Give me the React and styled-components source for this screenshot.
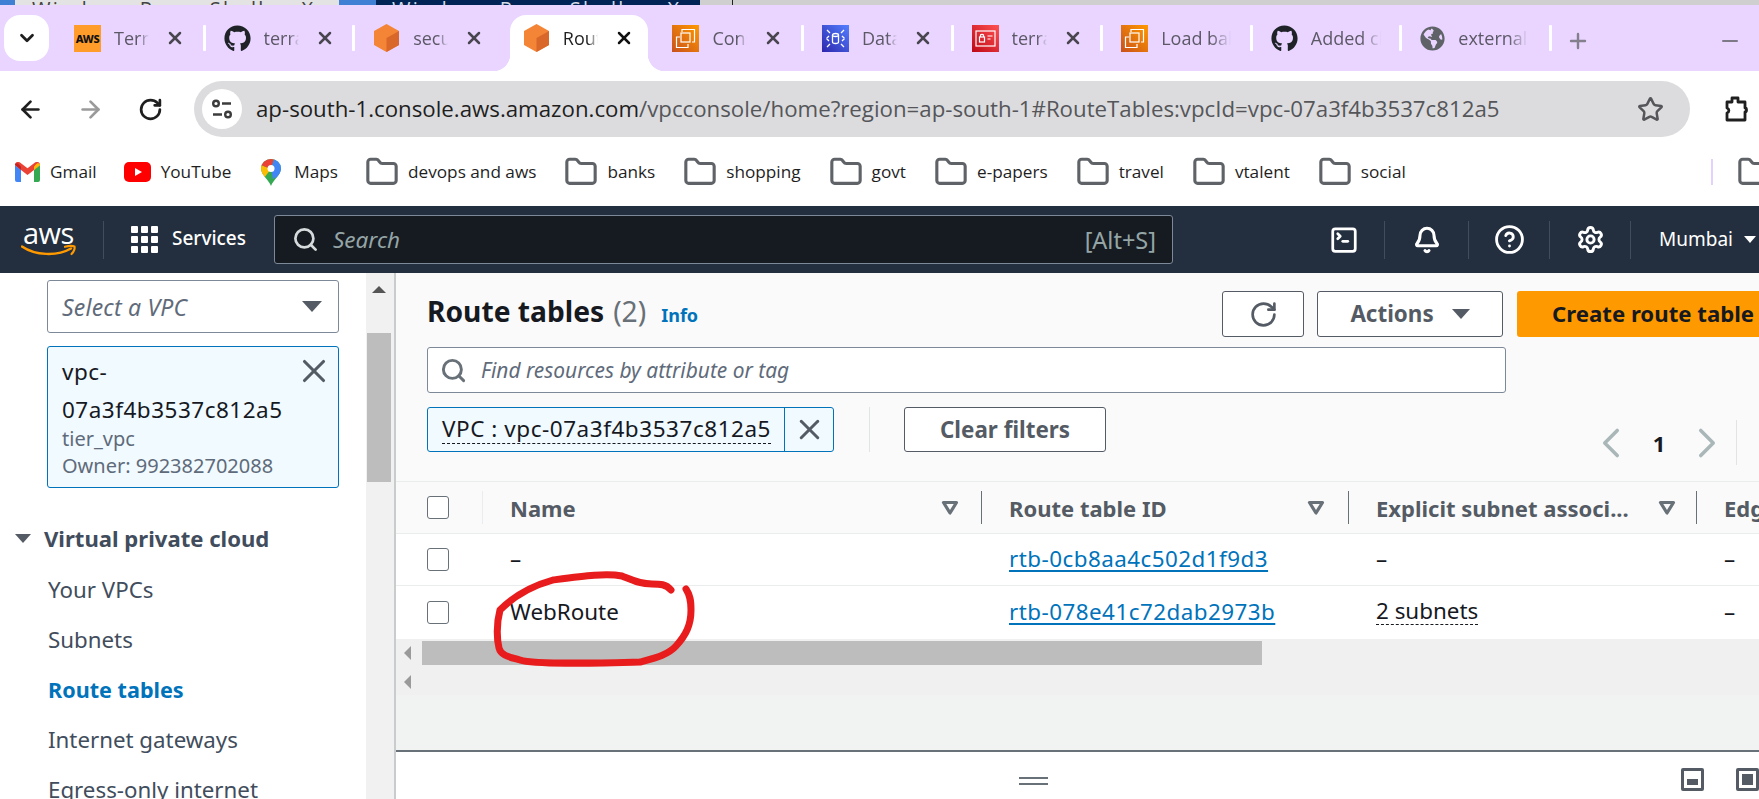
import React from 'react';
import styled, { createGlobalStyle } from 'styled-components';
import { ArrowLeft, ArrowRight, Bell, ChevronDown, ChevronLeft, ChevronRight, CircleHelp, Folder, Minus, Plus, RotateCw, Search, Settings, SquareTerminal, Star, X } from 'lucide-react';
import { FaGithub, FaGlobeAmericas } from 'react-icons/fa';

const GlobalStyle = createGlobalStyle`
  html, body { margin: 0; padding: 0; background: #fff; }
  * { box-sizing: border-box; }
`;

const ui = '"Open Sans", "Noto Sans", "Liberation Sans", sans-serif';
const consoleFont = '"Noto Sans", "Open Sans", "Liberation Sans", sans-serif';

const Page = styled.div`
  position: relative;
  width: 1759px;
  height: 799px;
  overflow: hidden;
  display: flex;
  flex-direction: column;
  font-family: ${consoleFont};
`;

/* sliver of the windows behind the browser */
const TaskStrip = styled.div`
  height: 5px;
  display: flex;
  overflow: hidden;
  background: #cfcfcf;
  flex: none;
`;
const TaskWin = styled.div`
  width: ${p => p.$w}px;
  flex: none;
  height: 5px;
  overflow: hidden;
  display: flex;
  font: 20px/18px ${ui};
  letter-spacing: 2.2px;
  white-space: nowrap;
  background: ${p => p.$bg};
  color: ${p => p.$fg};
`;
const TaskIcon = styled.span`
  width: ${p => p.$w}px;
  height: 5px;
  flex: none;
  margin-right: ${p => p.$gap}px;
  background: #3f7fd4;
`;
const TaskClose = styled.span`
  margin-left: ${p => p.$left}px;
`;
const TaskTick = styled.div`
  width: 1px;
  height: 5px;
  flex: none;
  margin-left: 32px;
  background: #222;
`;

const TabStrip = styled.div`
  height: 66px;
  flex: none;
  display: flex;
  align-items: flex-start;
  padding: 10px 0 0 4px;
  background: #e9d5ff;
`;
const TabListButton = styled.div`
  width: 45px;
  height: 46px;
  margin-right: 7px;
  flex: none;
  border-radius: 16px;
  background: #fff;
  color: #1f1f1f;
  display: flex;
  align-items: center;
  justify-content: center;
`;
const Tab = styled.div`
  position: relative;
  width: ${p => (p.$active ? 138.6 : 146.6)}px;
  height: 56px;
  flex: none;
  margin: ${p => (p.$active ? '0 3px 0 5px' : '0')};
  display: flex;
  align-items: center;
  padding: 0 0 10px ${p => (p.$active ? 13 : 18)}px;
  color: ${p => (p.$active ? '#1f1f1f' : '#5c5866')};
  background: ${p => (p.$active ? '#fff' : 'transparent')};
  border-radius: 16px 16px 0 0;
  &::before, &::after {
    content: '';
    display: ${p => (p.$active ? 'block' : 'none')};
    position: absolute;
    bottom: 0;
    width: 17px;
    height: 17px;
  }
  &::before {
    left: -17px;
    background: radial-gradient(circle at 0 0, transparent 17px, #fff 17.5px);
  }
  &::after {
    right: -17px;
    background: radial-gradient(circle at 100% 0, transparent 17px, #fff 17.5px);
  }
`;
const TabSep = styled.div`
  width: 3px;
  height: 26px;
  margin-top: 10px;
  flex: none;
  border-radius: 1px;
  background: ${p => (p.$hidden ? 'transparent' : '#fff')};
`;
const TabTitle = styled.span`
  width: ${p => (p.$wide ? 70 : 35)}px;
  margin-left: 13px;
  flex: none;
  overflow: hidden;
  white-space: nowrap;
  font: 18px/28px ${ui};
  -webkit-mask-image: linear-gradient(to right, #000 72%, transparent);
  mask-image: linear-gradient(to right, #000 72%, transparent);
`;
const TabClose = styled.span`
  margin-left: 16px;
  display: flex;
  color: ${p => (p.$active ? '#111' : '#4a4650')};
`;
const FavSquare = styled.span`
  width: 27px;
  height: 27px;
  flex: none;
  display: flex;
  align-items: center;
  justify-content: center;
  background: linear-gradient(45deg, ${p => p.$from}, ${p => p.$to});
`;
const AwsFav = styled(FavSquare)`
  color: #111;
  font: 800 11px/27px ${consoleFont};
  letter-spacing: -0.3px;
`;
const GitMark = styled(FaGithub)`
  width: 27px;
  height: 27px;
  flex: none;
  color: #1f2328;
`;
const GlobeMark = styled(FaGlobeAmericas)`
  width: 25px;
  height: 25px;
  flex: none;
  color: #5f6368;
`;
const NewTab = styled.div`
  margin: 14px 0 0 14px;
  display: flex;
  color: #837f8c;
`;
const WinMin = styled.div`
  margin: 14px 0 0 128px;
  display: flex;
  color: #7d7986;
`;

const Toolbar = styled.div`
  height: 76px;
  flex: none;
  display: flex;
  align-items: flex-start;
  padding-top: 10px;
  background: #fff;
`;
const NavBtn = styled.div`
  width: 60px;
  height: 56px;
  flex: none;
  display: flex;
  align-items: center;
  justify-content: center;
  color: ${p => (p.$off ? '#9a9a9a' : '#1f1f1f')};
`;
const Address = styled.div`
  width: 1496px;
  height: 56px;
  flex: none;
  margin-left: 14px;
  display: flex;
  align-items: center;
  padding: 0 26px 0 8px;
  border-radius: 28px;
  background: #dcdcde;
`;
const TuneDot = styled.span`
  width: 40px;
  height: 40px;
  flex: none;
  border-radius: 50%;
  background: #fff;
  display: flex;
  align-items: center;
  justify-content: center;
`;
const Url = styled.div`
  margin-left: 14px;
  font: 22.25px/28px ${ui};
  white-space: nowrap;
  color: #55565a;
`;
const UrlHost = styled.span`
  color: #1f1f1f;
`;
const StarSlot = styled.span`
  margin-left: auto;
  display: flex;
  color: #55565a;
`;
const ExtSlot = styled.span`
  margin: 14px 0 0 32px;
  display: flex;
`;

const Bookmarks = styled.div`
  height: 59px;
  flex: none;
  display: flex;
  align-items: flex-start;
  padding-left: 15px;
  background: #fff;
`;
const Bookmark = styled.div`
  height: 50px;
  flex: none;
  display: flex;
  align-items: center;
  gap: ${p => p.$gap || 9}px;
  margin-right: ${p => p.$after || 28}px;
  font: 17.2px/24px ${ui};
  color: #1f1f1f;
  svg { flex: none; }
`;
const BookSep = styled.div`
  width: 2px;
  height: 26px;
  flex: none;
  margin: 12px 24px 0 0;
  background: #e3d2fa;
`;

const ConsoleBar = styled.header`
  height: 67px;
  flex: none;
  display: flex;
  align-items: center;
  padding-left: 23px;
  background: #232f3e;
  color: #fff;
`;
const AwsLogo = styled.div`
  width: 53px;
  height: 34px;
  flex: none;
  position: relative;
  font: 500 29px/19px ${ui};
  letter-spacing: -0.6px;
  svg { position: absolute; left: -2px; bottom: 0; }
`;
const BarLine = styled.div`
  width: 1px;
  height: 38px;
  flex: none;
  margin-left: 27px;
  background: #414d5c;
`;
const GridDots = styled.div`
  margin-left: 27px;
  width: 27px;
  height: 27px;
  flex: none;
  display: grid;
  grid-template-columns: repeat(3, 7px);
  grid-auto-rows: 7px;
  gap: 3px;
  span { background: #fff; border-radius: 1px; }
`;
const ServicesLabel = styled.span`
  margin: -3px 0 0 14px;
  width: 102px;
  flex: none;
  font: 500 19px/24px ${consoleFont};
`;
const SearchBox = styled.div`
  width: 899px;
  height: 49px;
  flex: none;
  display: flex;
  align-items: center;
  padding: 0 16px 0 17px;
  border: 1px solid #7d8998;
  border-radius: 3px;
  background: #161b22;
  color: #95a5a6;
`;
const SearchHint = styled.span`
  margin-left: 14px;
  font: italic 22.5px/26px ${consoleFont};
`;
const SearchKeys = styled.span`
  margin-left: auto;
  font: 23.5px/26px ${consoleFont};
`;
const BarSlot = styled.div`
  width: ${p => p.$w}px;
  height: 38px;
  flex: none;
  display: flex;
  align-items: center;
  justify-content: center;
  margin-left: ${p => p.$left || 0}px;
  border-right: 1px solid #414d5c;
`;
const Region = styled.div`
  margin: -1px 0 0 28px;
  display: flex;
  align-items: center;
  gap: 11px;
  font: 19px/24px ${consoleFont};
  flex: none;
`;
const Caret = styled.span`
  width: 0;
  height: 0;
  flex: none;
  border-left: ${p => p.$size}px solid transparent;
  border-right: ${p => p.$size}px solid transparent;
  border-top: ${p => p.$size * 1.15}px solid ${p => p.$color};
`;

const Body = styled.div`
  flex: 1;
  min-height: 0;
  display: flex;
`;
const Sidebar = styled.nav`
  width: 366px;
  flex: none;
  overflow: hidden;
  padding: 7px 27px 0 47px;
  background: #fff;
`;
const VpcSelect = styled.div`
  height: 53px;
  display: flex;
  align-items: center;
  justify-content: space-between;
  padding: 0 16px 0 14px;
  border: 1px solid #7d8998;
  border-radius: 3px;
  font: italic 23px/26px ${consoleFont};
  letter-spacing: 0.2px;
  color: #5f6b7a;
`;
const VpcToken = styled.div`
  position: relative;
  height: 142px;
  margin-top: 13px;
  padding: 6px 14px 0;
  border: 1px solid #0073bb;
  border-radius: 3px;
  background: #f1faff;
`;
const VpcId = styled.div`
  font: 22.5px/38px ${consoleFont};
  letter-spacing: 0.5px;
  color: #16191f;
`;
const VpcMeta = styled.div`
  margin-top: -4px;
  font: 20px/27px ${consoleFont};
  color: #5f6b7a;
`;
const TokenClose = styled(X)`
  position: absolute;
  top: 5px;
  right: 5px;
  color: #545b64;
`;
const NavHeading = styled.div`
  margin: 25px 0 2px -32px;
  height: 50px;
  display: flex;
  align-items: center;
  gap: 13px;
  font: 700 22.1px/28px ${consoleFont};
  color: #414d5c;
`;
const NavItem = styled.div`
  height: 50px;
  margin-left: 1px;
  display: flex;
  align-items: center;
  font: ${p => (p.$current ? '700 21.6px' : '400 22.3px')}/28px ${consoleFont};
  color: ${p => (p.$current ? '#0073bb' : '#414d5c')};
  white-space: nowrap;
`;
const VScroll = styled.div`
  position: relative;
  width: 30px;
  flex: none;
  padding: 13px 4px 0 2px;
  display: flex;
  flex-direction: column;
  align-items: center;
  background: #f1f1f1;
  border-right: 2px solid #c9cccc;
`;
const VThumb = styled.div`
  width: 24px;
  height: 149px;
  margin-top: 40px;
  flex: none;
  background: #bdbdbd;
`;
const UpArrow = styled.span`
  width: 0;
  height: 0;
  border-left: 7px solid transparent;
  border-right: 7px solid transparent;
  border-bottom: 7px solid #555;
`;

const Main = styled.main`
  flex: 1;
  min-width: 0;
  display: flex;
  flex-direction: column;
  overflow: hidden;
  background: #fff;
`;
const Panel = styled.div`
  height: 209px;
  flex: none;
  padding: 18px 0 0 31px;
  background: #fafafa;
  border-bottom: 1px solid #eaeded;
`;
const PanelRow = styled.div`
  display: flex;
  align-items: ${p => p.$align || 'center'};
  margin-top: ${p => p.$top || 0}px;
`;
const TitleBlock = styled.div`
  width: 795px;
  flex: none;
  margin-top: -6px;
  display: flex;
  align-items: baseline;
`;
const Title = styled.h1`
  margin: 0;
  font: 700 28.2px/40px ${consoleFont};
  color: #16191f;
`;
const Count = styled.span`
  margin-left: 9px;
  font: 400 28.2px/40px ${consoleFont};
  color: #687078;
`;
const InfoLink = styled.span`
  margin-left: 15px;
  font: 700 18px/24px ${consoleFont};
  color: #0073bb;
`;
const OutlineBtn = styled.div`
  width: ${p => p.$w}px;
  height: ${p => p.$h || 46}px;
  flex: none;
  margin-left: ${p => p.$left || 0}px;
  display: flex;
  align-items: center;
  justify-content: center;
  gap: 18px;
  border: 1px solid #545b64;
  border-radius: 3px;
  background: #fff;
  font: 700 22.4px/26px ${consoleFont};
  color: #545b64;
`;
const PrimaryBtn = styled.div`
  width: 270px;
  height: 46px;
  flex: none;
  margin-left: 14px;
  padding-left: 35px;
  display: flex;
  align-items: center;
  border-radius: 3px;
  background: #ff9900;
  font: 700 22.2px/26px ${consoleFont};
  color: #16191f;
  white-space: nowrap;
`;
const FindBox = styled.div`
  width: 1079px;
  height: 46px;
  flex: none;
  display: flex;
  align-items: center;
  gap: 14px;
  padding-left: 12px;
  border: 1px solid #7d8998;
  border-radius: 3px;
  background: #fff;
  font: italic 20.9px/26px ${consoleFont};
  color: #5f6b7a;
`;
const FilterToken = styled.div`
  width: 407px;
  height: 45px;
  flex: none;
  display: flex;
  border: 1px solid #0073bb;
  border-radius: 3px;
  background: #f1faff;
`;
const FilterText = styled.div`
  width: 357px;
  flex: none;
  padding: 6px 0 0 14px;
  border-right: 1px solid #0073bb;
  font: 22.5px/29px ${consoleFont};
  letter-spacing: 0.54px;
  color: #16191f;
  white-space: nowrap;
`;
const DottedText = styled.span`
  display: inline-block;
  border-bottom: 1px dashed #16191f;
  line-height: ${p => p.$lh || 29}px;
`;
const TokenX = styled.div`
  flex: 1;
  display: flex;
  align-items: center;
  justify-content: center;
  color: #545b64;
`;
const RowLine = styled.div`
  width: 1px;
  height: 45px;
  flex: none;
  margin-left: ${p => p.$left}px;
  background: #e1e4e4;
`;
const Pager = styled.div`
  height: 45px;
  flex: none;
  margin: 13px 0 0 480px;
  display: flex;
  align-items: center;
  color: #aab7b8;
  font: 700 22px/26px ${consoleFont};
  svg { flex: none; }
`;
const PageNum = styled.span`
  width: 46px;
  flex: none;
  text-align: center;
  color: #16191f;
`;
const PagerGear = styled(Settings)`
  margin-left: 22px;
  flex: none;
  color: #545b64;
`;

const columns = '87px 499px 367px 348px 1fr';
const TableRow = styled.div`
  height: ${p => p.$h}px;
  flex: none;
  display: grid;
  grid-template-columns: ${columns};
  align-items: center;
  background: ${p => (p.$head ? '#fafafa' : '#fff')};
  border-bottom: ${p => (p.$last ? 'none' : '1px solid #eaeded')};
`;
const CheckCell = styled.div`
  height: 33px;
  padding-left: 31px;
  display: flex;
  align-items: center;
  border-right: ${p => (p.$head ? '1px solid #eaeded' : 'none')};
`;
const Checkbox = styled.span`
  width: 22px;
  height: 23px;
  border: 1.5px solid #687078;
  border-radius: 3px;
  background: #fff;
`;
const HeadCell = styled.div`
  height: 33px;
  padding: 0 ${p => p.$pad || 22}px 0 27px;
  display: flex;
  align-items: center;
  justify-content: space-between;
  border-right: ${p => (p.$last ? 'none' : '1px solid #687078')};
  font: 700 22px/26px ${consoleFont};
  color: #545b64;
  white-space: nowrap;
  overflow: hidden;
  svg { flex: none; }
`;
const Cell = styled.div`
  padding: 0 0 2px 27px;
  font: 22.4px/26px ${consoleFont};
  color: #16191f;
  white-space: nowrap;
`;
const RouteLink = styled.span`
  color: #0073bb;
  letter-spacing: 0.47px;
  text-decoration: underline;
  text-underline-offset: 3px;
`;
const HTrack = styled.div`
  height: 56px;
  flex: none;
  padding: 2px 0 0 8px;
  display: flex;
  flex-direction: column;
  background: #f0f0f0;
`;
const HLine = styled.div`
  height: 28px;
  display: flex;
  align-items: ${p => (p.$thumb ? 'flex-start' : 'center')};
  gap: 11px;
`;
const LeftArrow = styled.span`
  width: 0;
  height: 0;
  flex: none;
  margin-top: ${p => p.$top || 0}px;
  border-top: 7px solid transparent;
  border-bottom: 7px solid transparent;
  border-right: 7px solid #9a9a9a;
`;
const HThumb = styled.div`
  width: 840px;
  height: 24px;
  flex: none;
  background: #bdbdbd;
`;
const EmptyArea = styled.div`
  height: 57px;
  flex: none;
  background: #f1f3f3;
  border-bottom: 2px solid #687078;
`;
const SplitBar = styled.div`
  flex: 1;
  display: flex;
  align-items: flex-start;
  padding: 16px 0 0 623px;
  background: #fff;
`;
const DragHandle = styled.div`
  width: 29px;
  height: 8px;
  margin: 9px 633px 0 0;
  flex: none;
  border-top: 2px solid #687078;
  border-bottom: 2px solid #687078;
`;
const PanelToggle = styled.span`
  width: 23px;
  height: 23px;
  flex: none;
  margin-right: ${p => p.$after || 0}px;
  display: flex;
  align-items: flex-end;
  padding: 3px;
  border: 3px solid #545b64;
  border-radius: 2px;
  &::after {
    content: '';
    width: 100%;
    height: ${p => p.$fill}px;
    background: #545b64;
  }
`;
const RedMark = styled.svg`
  position: absolute;
  left: 0;
  top: 0;
  pointer-events: none;
`;

const Cube = () => (
  <svg width="27" height="28" viewBox="0 0 27 28" style={{ flex: 'none' }}>
    <polygon points="13.5,0 26,7 26,21 13.5,28 1,21 1,7" fill="#f58536" />
    <polygon points="13.5,14 26,7 26,21 13.5,28" fill="#d9672a" />
  </svg>
);

const Chips = () => (
  <svg width="21" height="21" viewBox="0 0 21 21" fill="none" stroke="#fff" strokeWidth="1.2">
    <path d="M7 4V1.5h12.5V14H17" />
    <rect x="6" y="5" width="9" height="9" />
    <path d="M5 9H1.5v10.5H13V16" />
  </svg>
);

const DbMark = () => (
  <svg width="21" height="21" viewBox="0 0 21 21" fill="none" stroke="#fff" strokeWidth="1.3">
    <ellipse cx="10.5" cy="7" rx="3" ry="1.5" />
    <path d="M7.5 7v7c0 2 6 2 6 0V7M1.5 10.5 4 8M1.5 10.5 4 13M19.5 10.5 17 8M19.5 10.5 17 13M2 2l3 3M19 2l-3 3M2 19l3-3M19 19l-3-3" />
  </svg>
);

const CertMark = () => (
  <svg width="21" height="21" viewBox="0 0 21 21" fill="none" stroke="#fff" strokeWidth="1.2">
    <rect x="1" y="3" width="19" height="15" />
    <rect x="4.5" y="9" width="5" height="5" />
    <path d="M5.5 9V7a2 2 0 0 1 3 0v2M12.5 8h5M12.5 11h3" />
  </svg>
);

const tabs = [
  { icon: <AwsFav $from="#ff9c2a" $to="#ff9c2a">AWS</AwsFav>, title: 'Terraform', close: true },
  { icon: <GitMark />, title: 'terraform', close: true },
  { icon: <Cube />, title: 'security', close: true },
  { icon: <Cube />, title: 'Route tables', close: true, active: true },
  { icon: <FavSquare $from="#c8511b" $to="#ff9900"><Chips /></FavSquare>, title: 'Console', close: true },
  { icon: <FavSquare $from="#2e27ad" $to="#527fff"><DbMark /></FavSquare>, title: 'Database', close: true },
  { icon: <FavSquare $from="#bd0816" $to="#ff5252"><CertMark /></FavSquare>, title: 'terraform', close: true },
  { icon: <FavSquare $from="#c8511b" $to="#ff9900"><Chips /></FavSquare>, title: 'Load balancers' },
  { icon: <GitMark />, title: 'Added changes' },
  { icon: <GlobeMark />, title: 'external-alb' },
];

const GmailIcon = () => (
  <svg width="25" height="20" viewBox="0 0 25 20">
    <path d="M0 3v15a2 2 0 0 0 2 2h4V8z" fill="#4285f4" />
    <path d="M25 3v15a2 2 0 0 1-2 2h-4V8z" fill="#34a853" />
    <path d="M6 8 0 3c0-3 3-4 5-2.500l7.500 5.700L20 .5C22-1 25 0 25 3l-6 5-6.500 5z" fill="#ea4335" />
    <path d="M0 3l6 5V4.500L3 1.600C1.500.6 0 1.500 0 3z" fill="#c5221f" />
    <path d="M25 3l-6 5V4.500l3-2.900C23.500.6 25 1.500 25 3z" fill="#fbbc04" />
  </svg>
);

const YoutubeIcon = () => (
  <svg width="27" height="20" viewBox="0 0 27 20">
    <rect width="27" height="20" rx="5" fill="#f00" />
    <polygon points="11,6 18,10 11,14" fill="#fff" />
  </svg>
);

const MapsIcon = () => (
  <svg width="20" height="27" viewBox="0 0 20 27">
    <clipPath id="pin">
      <path d="M10 27C8 21 0 16 0 9.500a10 9.500 0 0 1 20 0C20 16 12 21 10 27z" />
    </clipPath>
    <g clipPath="url(#pin)">
      <rect width="20" height="27" fill="#34a853" />
      <polygon points="0,6 10,10 3,19 0,16" fill="#fbbc04" />
      <polygon points="0,0 13,0 10,10 0,6" fill="#ea4335" />
      <polygon points="13,0 20,0 20,16 12,20 10,10" fill="#4285f4" />
    </g>
    <circle cx="10" cy="9.500" r="3.500" fill="#fff" />
  </svg>
);

const FolderMark = () => <Folder size={34} color="#5f6368" strokeWidth={2.2} />;

const TuneIcon = () => (
  <svg width="22" height="22" viewBox="0 0 22 22" fill="none" stroke="#3c3c3c" strokeWidth="2.4">
    <circle cx="5" cy="5.500" r="2.800" />
    <path d="M11 5.500h9M2 16.500h9" />
    <circle cx="17" cy="16.500" r="2.800" />
  </svg>
);

const ExtensionIcon = () => (
  <svg width="28" height="28" viewBox="0 0 28 28" fill="none" stroke="#1f1f1f" strokeWidth="2.800" strokeLinejoin="round">
    <path d="M5 7h5V3h6v4h7v6c2 0 2 4 0 4v8H5v-7c2.500-1 2.500-4 0-5z" />
  </svg>
);

const SortMark = () => (
  <svg width="18" height="16" viewBox="0 0 18 16" fill="none" stroke="#687078" strokeWidth="3.200" strokeLinejoin="round">
    <polygon points="2.500,2.500 15.500,2.500 9,13" />
  </svg>
);

const Smile = () => (
  <svg width="56" height="13" viewBox="0 0 56 13" fill="none">
    <path d="M1 2.500C14 11.500 36 12.500 50 4.500" stroke="#ff9900" strokeWidth="2.400" strokeLinecap="round" />
    <path d="M44 2.800c4-1 7.500-1 9.500-.3.500 2-1 5.500-3 7.500" stroke="#ff9900" strokeWidth="2.200" strokeLinecap="round" />
  </svg>
);

const rows = [
  { name: '–', id: 'rtb-0cb8aa4c502d1f9d3', subnets: '–', edge: '–' },
  { name: 'WebRoute', id: 'rtb-078e41c72dab2973b', subnets: '2 subnets', edge: '–', last: true },
];

const navItems = ['Your VPCs', 'Subnets', 'Route tables', 'Internet gateways', 'Egress-only internet'];

export default function App() {
  return (
    <Page>
      <GlobalStyle />
      <TaskStrip>
        <TaskWin $w={339} $bg="#e3e3e3" $fg="#444">
          <TaskIcon $w={15} $gap={17} />
          Windows PowerShell
          <TaskClose $left={36}>X</TaskClose>
        </TaskWin>
        <TaskWin $w={361} $bg="#012456" $fg="#d5dbe6">
          <TaskIcon $w={37} $gap={16} />
          Windows PowerShell
          <TaskClose $left={42}>X</TaskClose>
        </TaskWin>
        <TaskTick />
      </TaskStrip>

      <TabStrip>
        <TabListButton><ChevronDown size={22} strokeWidth={3} /></TabListButton>
        {tabs.map((t, i) => (
          <React.Fragment key={i}>
            <Tab $active={t.active}>
              {t.icon}
              <TabTitle $wide={!t.close}>{t.title}</TabTitle>
              {t.close && <TabClose $active={t.active}><X size={20} strokeWidth={3} /></TabClose>}
            </Tab>
            <TabSep $hidden={t.active || (tabs[i + 1] && tabs[i + 1].active)} />
          </React.Fragment>
        ))}
        <NewTab><Plus size={24} strokeWidth={2.4} /></NewTab>
        <WinMin><Minus size={24} strokeWidth={2} /></WinMin>
      </TabStrip>

      <Toolbar>
        <NavBtn><ArrowLeft size={27} strokeWidth={2.4} /></NavBtn>
        <NavBtn $off><ArrowRight size={27} strokeWidth={2.4} /></NavBtn>
        <NavBtn><RotateCw size={25} strokeWidth={2.6} /></NavBtn>
        <Address>
          <TuneDot><TuneIcon /></TuneDot>
          <Url><UrlHost>ap-south-1.console.aws.amazon.com</UrlHost>/vpcconsole/home?region=ap-south-1#RouteTables:vpcId=vpc-07a3f4b3537c812a5</Url>
          <StarSlot><Star size={27} strokeWidth={2.2} /></StarSlot>
        </Address>
        <ExtSlot><ExtensionIcon /></ExtSlot>
      </Toolbar>

      <Bookmarks>
        <Bookmark $gap={10} $after={27}><GmailIcon />Gmail</Bookmark>
        <Bookmark $gap={10} $after={30}><YoutubeIcon />YouTube</Bookmark>
        <Bookmark $gap={13} $after={27}><MapsIcon />Maps</Bookmark>
        {['devops and aws', 'banks', 'shopping', 'govt', 'e-papers', 'travel', 'vtalent'].map(f => (
          <Bookmark key={f}><FolderMark />{f}</Bookmark>
        ))}
        <Bookmark $after={305}><FolderMark />social</Bookmark>
        <BookSep />
        <Bookmark><FolderMark /></Bookmark>
      </Bookmarks>

      <ConsoleBar>
        <AwsLogo>aws<Smile /></AwsLogo>
        <BarLine />
        <GridDots>{Array.from({ length: 9 }, (_, i) => <span key={i} />)}</GridDots>
        <ServicesLabel>Services</ServicesLabel>
        <SearchBox>
          <Search size={27} strokeWidth={2.4} color="#d5dbdb" />
          <SearchHint>Search</SearchHint>
          <SearchKeys>[Alt+S]</SearchKeys>
        </SearchBox>
        <BarSlot $w={82} $left={130}><SquareTerminal size={30} strokeWidth={2.2} /></BarSlot>
        <BarSlot $w={84}><Bell size={28} strokeWidth={2.6} /></BarSlot>
        <BarSlot $w={81}><CircleHelp size={31} strokeWidth={2.2} /></BarSlot>
        <BarSlot $w={81}><Settings size={29} strokeWidth={2.4} /></BarSlot>
        <Region>Mumbai<Caret $size={6.5} $color="#fff" /></Region>
      </ConsoleBar>

      <Body>
        <Sidebar>
          <VpcSelect>Select a VPC<Caret $size={10} $color="#545b64" /></VpcSelect>
          <VpcToken>
            <TokenClose size={38} strokeWidth={2} />
            <VpcId>vpc-<br />07a3f4b3537c812a5</VpcId>
            <VpcMeta>tier_vpc<br />Owner: 992382702088</VpcMeta>
          </VpcToken>
          <NavHeading><Caret $size={8.5} $color="#545b64" />Virtual private cloud</NavHeading>
          {navItems.map(n => <NavItem key={n} $current={n === 'Route tables'}>{n}</NavItem>)}
        </Sidebar>
        <VScroll>
          <UpArrow />
          <VThumb />
        </VScroll>
        <Main>
          <Panel>
            <PanelRow>
              <TitleBlock>
                <Title>Route tables</Title>
                <Count>(2)</Count>
                <InfoLink>Info</InfoLink>
              </TitleBlock>
              <OutlineBtn $w={82}><RotateCw size={29} strokeWidth={2.2} /></OutlineBtn>
              <OutlineBtn $w={186} $left={13}>Actions<Caret $size={9} $color="#545b64" /></OutlineBtn>
              <PrimaryBtn>Create route table</PrimaryBtn>
            </PanelRow>
            <PanelRow $top={10}>
              <FindBox><Search size={27} strokeWidth={2.6} color="#687078" />Find resources by attribute or tag</FindBox>
            </PanelRow>
            <PanelRow $top={14} $align="flex-start">
              <FilterToken>
                <FilterText><DottedText>VPC : vpc-07a3f4b3537c812a5</DottedText></FilterText>
                <TokenX><X size={33} strokeWidth={2.2} /></TokenX>
              </FilterToken>
              <RowLine $left={35} />
              <OutlineBtn $w={202} $h={45} $left={34}>Clear filters</OutlineBtn>
              <Pager>
                <ChevronLeft size={50} strokeWidth={1.7} />
                <PageNum>1</PageNum>
                <ChevronRight size={50} strokeWidth={1.7} />
                <RowLine $left={4} />
                <PagerGear size={26} />
              </Pager>
            </PanelRow>
          </Panel>

          <TableRow $h={52} $head>
            <CheckCell $head><Checkbox /></CheckCell>
            <HeadCell>Name<SortMark /></HeadCell>
            <HeadCell $pad={23}>Route table ID<SortMark /></HeadCell>
            <HeadCell $pad={20}>Explicit subnet associ...<SortMark /></HeadCell>
            <HeadCell $last>Edge associations</HeadCell>
          </TableRow>
          {rows.map(r => (
            <TableRow key={r.id} $h={r.last ? 53 : 52} $last={r.last}>
              <CheckCell><Checkbox /></CheckCell>
              <Cell>{r.name}</Cell>
              <Cell><RouteLink>{r.id}</RouteLink></Cell>
              <Cell>{r.subnets === '–' ? r.subnets : <DottedText $lh={26}>{r.subnets}</DottedText>}</Cell>
              <Cell>{r.edge}</Cell>
            </TableRow>
          ))}
          <HTrack>
            <HLine $thumb><LeftArrow $top={5} /><HThumb /></HLine>
            <HLine><LeftArrow /></HLine>
          </HTrack>
          <EmptyArea />
          <SplitBar>
            <DragHandle />
            <PanelToggle $fill={6} $after={32} />
            <PanelToggle $fill={11} />
          </SplitBar>
        </Main>
      </Body>

      <RedMark width="1759" height="799" viewBox="0 0 1759 799" fill="none">
        <path
          d="M671 590C666 584 660 584 652 584C640 584 632 580 622 576C606 573 584 576 553 580C535 585 515 595 500 610C496 625 497 640 499 648C501 656 510 657 520 660C535 665 600 663 640 662C655 658 668 655 676 646C686 635 691 625 691 610C691 600 690 595 686 589"
          stroke="#e81c1c"
          strokeWidth="7"
          strokeLinecap="round"
          strokeLinejoin="round"
        />
      </RedMark>
    </Page>
  );
}
